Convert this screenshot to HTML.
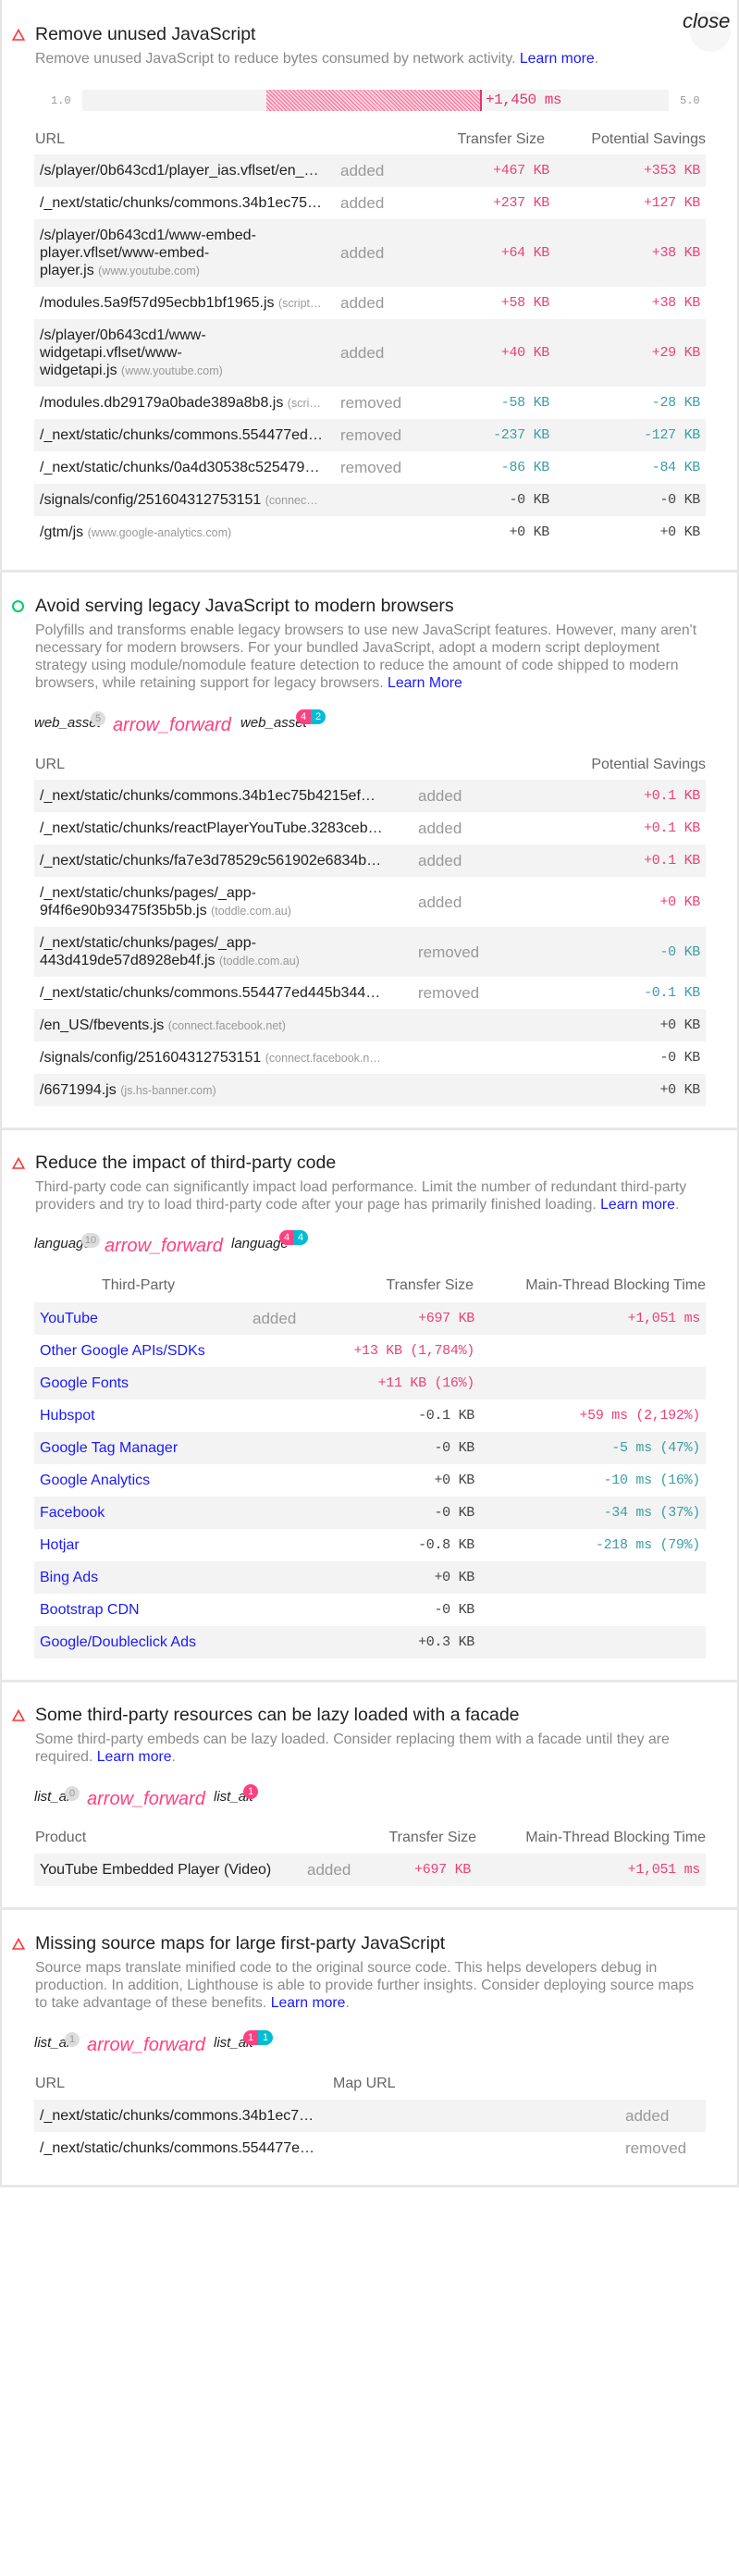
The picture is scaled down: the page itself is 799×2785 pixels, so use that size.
<!DOCTYPE html>
<html><head><meta charset="utf-8"><style>
*{box-sizing:border-box;margin:0;padding:0}
body{width:799px;height:2785px;background:#fff;position:relative;font-family:"Liberation Sans",Arial,sans-serif;color:#212121;overflow:hidden}
.ab{position:absolute}
.lb{position:absolute;left:0;top:0;width:2px;height:2363px;background:#e4e4e4}
.rb{position:absolute;right:0;top:0;width:2px;height:2363px;background:#e4e4e4}
.div{position:absolute;left:0;width:799px;height:3px;background:#e8e8e8}
.title{position:absolute;left:38px;font-size:19.5px;color:#212121;white-space:nowrap;line-height:22px}
.desc{position:absolute;left:38px;font-size:15.8px;color:#8a8a8a;line-height:19px;white-space:nowrap}
.desc a{color:#1a1aff;text-decoration:none}
.tri{position:absolute;left:13px;width:14px;height:13px}
.hdr{position:absolute;font-size:16px;color:#666;white-space:nowrap;line-height:18px}
.row{position:absolute;left:37px;width:726px;display:flex;align-items:center;font-size:16px;white-space:nowrap}
.row.s{background:#f3f3f3}
.c{overflow:hidden;padding-left:6px;line-height:19px}
.st{color:#999;font-size:17px}
.m{font-family:"Liberation Mono",monospace;font-size:15px;text-align:right;padding-right:6px;letter-spacing:-0.3px;white-space:nowrap}
.p{color:#ec407a}.t{color:#3b9fa6}.k{color:#444}
.h{color:#999;font-size:12.5px}
.lk{color:#1a1aff}
.ic{position:absolute;font-style:italic;font-size:15px;color:#222;overflow:hidden;white-space:nowrap;line-height:20px}
.af{position:absolute;font-style:italic;font-size:20px;color:#ff4081;white-space:nowrap;line-height:24px}
.bg{position:absolute;width:16px;height:16px;border-radius:8px;background:#ddd;color:#999;font-size:11px;text-align:center;line-height:16px}
.pp{position:absolute;height:16px;width:16px;background:#ff4081;color:#fff;font-size:11px;text-align:center;line-height:16px;border-radius:8px 0 0 8px}
.pt{position:absolute;height:16px;width:16px;background:#00bcd4;color:#fff;font-size:11px;text-align:center;line-height:16px;border-radius:0 8px 8px 0}
.one{border-radius:8px}
</style></head><body>
<div class="lb"></div><div class="rb"></div>

<div class="ab" style="left:746px;top:12px;width:44px;height:44px;border-radius:22px;background:#f6f6f6"></div>
<div class="ab" style="left:738px;top:10px;font-size:22px;font-style:italic;color:#222">close</div>

<!-- SECTION 1 -->
<svg class="tri" style="top:31px" viewBox="0 0 14 13"><path d="M7 1.5L12.8 12H1.2Z" fill="none" stroke="#f33" stroke-width="1.6"/></svg>
<div class="title" style="top:26px">Remove unused JavaScript</div>
<div class="desc" style="top:54px">Remove unused JavaScript to reduce bytes consumed by network activity. <a>Learn more</a>.</div>
<div class="ab" style="left:55px;top:102px;font-family:'Liberation Mono',monospace;font-size:12px;color:#999">1.0</div>
<div class="ab" style="left:735px;top:102px;font-family:'Liberation Mono',monospace;font-size:12px;color:#999">5.0</div>
<div class="ab" style="left:89px;top:97px;width:634px;height:23px;background:#f3f3f3"></div>
<div class="ab" style="left:288px;top:97px;width:232px;height:23px;background:repeating-linear-gradient(45deg,#f26d94 0 1px,#fbd0dc 1px 3px)"></div>
<div class="ab" style="left:519px;top:97px;width:2px;height:23px;background:#e8336d"></div>
<div class="ab" style="left:525px;top:99px;font-family:'Liberation Mono',monospace;font-size:16px;color:#e8336d;letter-spacing:-0.5px">+1,450 ms</div>
<div class="hdr" style="left:38px;top:142px">URL</div>
<div class="hdr" style="left:440px;width:149px;text-align:right;top:142px">Transfer Size</div>
<div class="hdr" style="left:600px;width:163px;text-align:right;top:142px">Potential Savings</div>

<div class="row s" style="top:167px;height:35px"><div class="c" style="width:325px">/s/player/0b643cd1/player_ias.vflset/en_…</div><div class="c st" style="width:96px">added</div><div class="m p" style="width:142px">+467 KB</div><div class="m p" style="width:163px">+353 KB</div></div>
<div class="row" style="top:202px;height:35px"><div class="c" style="width:325px">/_next/static/chunks/commons.34b1ec75…</div><div class="c st" style="width:96px">added</div><div class="m p" style="width:142px">+237 KB</div><div class="m p" style="width:163px">+127 KB</div></div>
<div class="row s" style="top:237px;height:73px"><div class="c" style="width:325px">/s/player/0b643cd1/www-embed-<br>player.vflset/www-embed-<br>player.js <span class="h">(www.youtube.com)</span></div><div class="c st" style="width:96px">added</div><div class="m p" style="width:142px">+64 KB</div><div class="m p" style="width:163px">+38 KB</div></div>
<div class="row" style="top:310px;height:35px"><div class="c" style="width:325px">/modules.5a9f57d95ecbb1bf1965.js <span class="h">(script…</span></div><div class="c st" style="width:96px">added</div><div class="m p" style="width:142px">+58 KB</div><div class="m p" style="width:163px">+38 KB</div></div>
<div class="row s" style="top:345px;height:73px"><div class="c" style="width:325px">/s/player/0b643cd1/www-<br>widgetapi.vflset/www-<br>widgetapi.js <span class="h">(www.youtube.com)</span></div><div class="c st" style="width:96px">added</div><div class="m p" style="width:142px">+40 KB</div><div class="m p" style="width:163px">+29 KB</div></div>
<div class="row" style="top:418px;height:35px"><div class="c" style="width:325px">/modules.db29179a0bade389a8b8.js <span class="h">(scri…</span></div><div class="c st" style="width:96px">removed</div><div class="m t" style="width:142px">-58 KB</div><div class="m t" style="width:163px">-28 KB</div></div>
<div class="row s" style="top:453px;height:35px"><div class="c" style="width:325px">/_next/static/chunks/commons.554477ed…</div><div class="c st" style="width:96px">removed</div><div class="m t" style="width:142px">-237 KB</div><div class="m t" style="width:163px">-127 KB</div></div>
<div class="row" style="top:488px;height:35px"><div class="c" style="width:325px">/_next/static/chunks/0a4d30538c525479…</div><div class="c st" style="width:96px">removed</div><div class="m t" style="width:142px">-86 KB</div><div class="m t" style="width:163px">-84 KB</div></div>
<div class="row s" style="top:523px;height:35px"><div class="c" style="width:325px">/signals/config/251604312753151 <span class="h">(connec…</span></div><div class="c st" style="width:96px"></div><div class="m k" style="width:142px">-0 KB</div><div class="m k" style="width:163px">-0 KB</div></div>
<div class="row" style="top:558px;height:35px"><div class="c" style="width:325px">/gtm/js <span class="h">(www.google-analytics.com)</span></div><div class="c st" style="width:96px"></div><div class="m k" style="width:142px">+0 KB</div><div class="m k" style="width:163px">+0 KB</div></div>
<div class="div" style="top:616px"></div>

<!-- SECTION 2 -->
<div class="ab" style="left:13px;top:649px;width:13px;height:13px;border-radius:7px;border:2px solid #0c6"></div>
<div class="title" style="top:644px">Avoid serving legacy JavaScript to modern browsers</div>
<div class="desc" style="top:672px">Polyfills and transforms enable legacy browsers to use new JavaScript features. However, many aren't<br>necessary for modern browsers. For your bundled JavaScript, adopt a modern script deployment<br>strategy using module/nomodule feature detection to reduce the amount of code shipped to modern<br>browsers, while retaining support for legacy browsers. <a>Learn More</a></div>
<div class="ic" style="left:37px;top:772px;width:73px">web_asset</div><div class="bg" style="left:98px;top:769px">5</div>
<div class="af" style="left:122px;top:772px">arrow_forward</div>
<div class="ic" style="left:260px;top:772px;width:72px">web_asset</div><div class="pp" style="left:320px;top:767px">4</div><div class="pt" style="left:336px;top:767px">2</div>
<div class="hdr" style="left:38px;top:818px">URL</div>
<div class="hdr" style="left:560px;width:203px;text-align:right;top:818px">Potential Savings</div>

<div class="row s" style="top:843px;height:35px"><div class="c" style="width:409px">/_next/static/chunks/commons.34b1ec75b4215ef…</div><div class="c st" style="width:115px">added</div><div class="m p" style="width:202px">+0.1 KB</div></div>
<div class="row" style="top:878px;height:35px"><div class="c" style="width:409px">/_next/static/chunks/reactPlayerYouTube.3283ceb…</div><div class="c st" style="width:115px">added</div><div class="m p" style="width:202px">+0.1 KB</div></div>
<div class="row s" style="top:913px;height:35px"><div class="c" style="width:409px">/_next/static/chunks/fa7e3d78529c561902e6834b…</div><div class="c st" style="width:115px">added</div><div class="m p" style="width:202px">+0.1 KB</div></div>
<div class="row" style="top:948px;height:54px"><div class="c" style="width:409px">/_next/static/chunks/pages/_app-<br>9f4f6e90b93475f35b5b.js <span class="h">(toddle.com.au)</span></div><div class="c st" style="width:115px">added</div><div class="m p" style="width:202px">+0 KB</div></div>
<div class="row s" style="top:1002px;height:54px"><div class="c" style="width:409px">/_next/static/chunks/pages/_app-<br>443d419de57d8928eb4f.js <span class="h">(toddle.com.au)</span></div><div class="c st" style="width:115px">removed</div><div class="m t" style="width:202px">-0 KB</div></div>
<div class="row" style="top:1056px;height:35px"><div class="c" style="width:409px">/_next/static/chunks/commons.554477ed445b344…</div><div class="c st" style="width:115px">removed</div><div class="m t" style="width:202px">-0.1 KB</div></div>
<div class="row s" style="top:1091px;height:35px"><div class="c" style="width:409px">/en_US/fbevents.js <span class="h">(connect.facebook.net)</span></div><div class="c st" style="width:115px"></div><div class="m k" style="width:202px">+0 KB</div></div>
<div class="row" style="top:1126px;height:35px"><div class="c" style="width:409px">/signals/config/251604312753151 <span class="h">(connect.facebook.n…</span></div><div class="c st" style="width:115px"></div><div class="m k" style="width:202px">-0 KB</div></div>
<div class="row s" style="top:1161px;height:35px"><div class="c" style="width:409px">/6671994.js <span class="h">(js.hs-banner.com)</span></div><div class="c st" style="width:115px"></div><div class="m k" style="width:202px">+0 KB</div></div>
<div class="div" style="top:1219px"></div>

<!-- SECTION 3 -->
<svg class="tri" style="top:1251px" viewBox="0 0 14 13"><path d="M7 1.5L12.8 12H1.2Z" fill="none" stroke="#f33" stroke-width="1.6"/></svg>
<div class="title" style="top:1246px">Reduce the impact of third-party code</div>
<div class="desc" style="top:1274px">Third-party code can significantly impact load performance. Limit the number of redundant third-party<br>providers and try to load third-party code after your page has primarily finished loading. <a>Learn more</a>.</div>
<div class="ic" style="left:37px;top:1335px;width:62px">language</div><div class="bg" style="left:88px;top:1333px;width:20px">10</div>
<div class="af" style="left:113px;top:1335px">arrow_forward</div>
<div class="ic" style="left:250px;top:1335px;width:62px">language</div><div class="pp" style="left:302px;top:1330px">4</div><div class="pt" style="left:317px;top:1330px">4</div>
<div class="hdr" style="left:110px;top:1381px">Third-Party</div>
<div class="hdr" style="left:334px;width:178px;text-align:right;top:1381px">Transfer Size</div>
<div class="hdr" style="left:519px;width:244px;text-align:right;top:1381px">Main-Thread Blocking Time</div>

<div class="row s" style="top:1408px;height:35px"><div class="c lk" style="width:230px">YouTube</div><div class="c st" style="width:67px">added</div><div class="m p" style="width:185px">+697 KB</div><div class="m p" style="width:244px">+1,051 ms</div></div>
<div class="row" style="top:1443px;height:35px"><div class="c lk" style="width:230px">Other Google APIs/SDKs</div><div class="c st" style="width:67px"></div><div class="m p" style="width:185px;overflow:visible;direction:rtl"><span style="direction:ltr;unicode-bidi:embed">+13 KB (1,784%)</span></div><div class="m p" style="width:244px"></div></div>
<div class="row s" style="top:1478px;height:35px"><div class="c lk" style="width:230px">Google Fonts</div><div class="c st" style="width:67px"></div><div class="m p" style="width:185px">+11 KB (16%)</div><div class="m" style="width:244px"></div></div>
<div class="row" style="top:1513px;height:35px"><div class="c lk" style="width:230px">Hubspot</div><div class="c st" style="width:67px"></div><div class="m k" style="width:185px">-0.1 KB</div><div class="m p" style="width:244px">+59 ms (2,192%)</div></div>
<div class="row s" style="top:1548px;height:35px"><div class="c lk" style="width:230px">Google Tag Manager</div><div class="c st" style="width:67px"></div><div class="m k" style="width:185px">-0 KB</div><div class="m t" style="width:244px">-5 ms (47%)</div></div>
<div class="row" style="top:1583px;height:35px"><div class="c lk" style="width:230px">Google Analytics</div><div class="c st" style="width:67px"></div><div class="m k" style="width:185px">+0 KB</div><div class="m t" style="width:244px">-10 ms (16%)</div></div>
<div class="row s" style="top:1618px;height:35px"><div class="c lk" style="width:230px">Facebook</div><div class="c st" style="width:67px"></div><div class="m k" style="width:185px">-0 KB</div><div class="m t" style="width:244px">-34 ms (37%)</div></div>
<div class="row" style="top:1653px;height:35px"><div class="c lk" style="width:230px">Hotjar</div><div class="c st" style="width:67px"></div><div class="m k" style="width:185px">-0.8 KB</div><div class="m t" style="width:244px">-218 ms (79%)</div></div>
<div class="row s" style="top:1688px;height:35px"><div class="c lk" style="width:230px">Bing Ads</div><div class="c st" style="width:67px"></div><div class="m k" style="width:185px">+0 KB</div><div class="m" style="width:244px"></div></div>
<div class="row" style="top:1723px;height:35px"><div class="c lk" style="width:230px">Bootstrap CDN</div><div class="c st" style="width:67px"></div><div class="m k" style="width:185px">-0 KB</div><div class="m" style="width:244px"></div></div>
<div class="row s" style="top:1758px;height:35px"><div class="c lk" style="width:230px">Google/Doubleclick Ads</div><div class="c st" style="width:67px"></div><div class="m k" style="width:185px">+0.3 KB</div><div class="m" style="width:244px"></div></div>
<div class="div" style="top:1816px"></div>

<!-- SECTION 4 -->
<svg class="tri" style="top:1848px" viewBox="0 0 14 13"><path d="M7 1.5L12.8 12H1.2Z" fill="none" stroke="#f33" stroke-width="1.6"/></svg>
<div class="title" style="top:1843px">Some third-party resources can be lazy loaded with a facade</div>
<div class="desc" style="top:1871px">Some third-party embeds can be lazy loaded. Consider replacing them with a facade until they are<br>required. <a>Learn more</a>.</div>
<div class="ic" style="left:37px;top:1933px;width:44px">list_alt</div><div class="bg" style="left:70px;top:1931px">0</div>
<div class="af" style="left:94px;top:1933px">arrow_forward</div>
<div class="ic" style="left:231px;top:1933px;width:44px">list_alt</div><div class="pp one" style="left:263px;top:1929px">1</div>
<div class="hdr" style="left:38px;top:1978px">Product</div>
<div class="hdr" style="left:394px;width:121px;text-align:right;top:1978px">Transfer Size</div>
<div class="hdr" style="left:519px;width:244px;text-align:right;top:1978px">Main-Thread Blocking Time</div>
<div class="row s" style="top:2004px;height:35px"><div class="c" style="width:289px">YouTube Embedded Player (Video)</div><div class="c st" style="width:68px">added</div><div class="m p" style="width:121px">+697 KB</div><div class="m p" style="width:248px">+1,051 ms</div></div>
<div class="div" style="top:2062px"></div>

<!-- SECTION 5 -->
<svg class="tri" style="top:2095px" viewBox="0 0 14 13"><path d="M7 1.5L12.8 12H1.2Z" fill="none" stroke="#f33" stroke-width="1.6"/></svg>
<div class="title" style="top:2090px">Missing source maps for large first-party JavaScript</div>
<div class="desc" style="top:2118px">Source maps translate minified code to the original source code. This helps developers debug in<br>production. In addition, Lighthouse is able to provide further insights. Consider deploying source maps<br>to take advantage of these benefits. <a>Learn more</a>.</div>
<div class="ic" style="left:37px;top:2199px;width:44px">list_alt</div><div class="bg" style="left:70px;top:2197px">1</div>
<div class="af" style="left:94px;top:2199px">arrow_forward</div>
<div class="ic" style="left:231px;top:2199px;width:44px">list_alt</div><div class="pp" style="left:263px;top:2195px">1</div><div class="pt" style="left:279px;top:2195px">1</div>
<div class="hdr" style="left:38px;top:2244px">URL</div>
<div class="hdr" style="left:360px;top:2244px">Map URL</div>
<div class="row s" style="top:2270px;height:35px"><div class="c" style="width:633px">/_next/static/chunks/commons.34b1ec7…</div><div class="c st" style="width:93px">added</div></div>
<div class="row" style="top:2305px;height:35px"><div class="c" style="width:633px">/_next/static/chunks/commons.554477e…</div><div class="c st" style="width:93px">removed</div></div>
<div class="div" style="top:2362px"></div>
</body></html>
